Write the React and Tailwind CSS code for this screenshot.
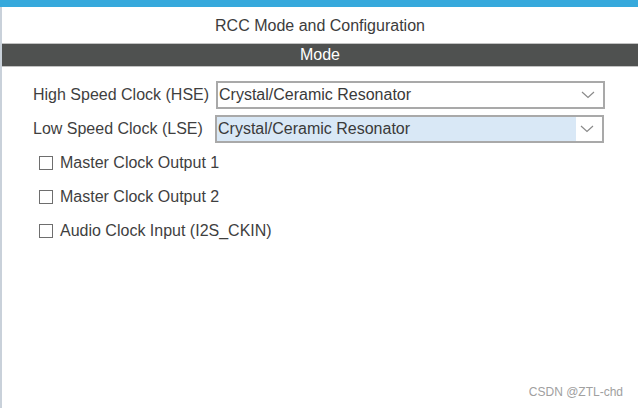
import React from "react";

function Chevron() {
  return (
    <svg width="14" height="8" viewBox="0 0 14 8" fill="none">
      <path d="M1 1 L7 6.5 L13 1" stroke="#8a8a8a" strokeWidth="1.2" />
    </svg>
  );
}

function Select({ highlighted }) {
  return (
    <div className="flex h-[28px] w-[389px] border-2 border-[#a9a9a9] bg-white">
      <div
        className={
          "flex flex-1 items-center pl-[1px] text-[16px] text-[#3a3a3a] " +
          (highlighted ? "bg-[#d9e8f6]" : "bg-white")
        }
      >
        Crystal/Ceramic Resonator
      </div>
      <div className="flex w-[26px] items-center justify-center bg-white pr-[4px]">
        <Chevron />
      </div>
    </div>
  );
}

function Check({ label }) {
  return (
    <div className="flex h-[34px] items-center">
      <div className="ml-[6px] h-[14px] w-[14px] border-[1.5px] border-[#6e6e6e] bg-white" />
      <span className="ml-[7px] text-[16px] text-[#3f3f3f]">{label}</span>
    </div>
  );
}

export default function App() {
  return (
    <div
      className="relative flex h-[408px] w-[638px] flex-col bg-white"
      style={{ fontFamily: '"Liberation Sans", Arial, sans-serif' }}
    >
      <div className="h-[7px] bg-[#36a9dc]" />
      <div className="flex flex-1 flex-col border-l-2 border-[#c9d1da]">
        <div className="flex h-[36px] items-center justify-center pt-[2px] text-[16px] text-[#3c3c3c]">
          RCC Mode and Configuration
        </div>
        <div className="flex h-[24px] items-center justify-center border-y border-[#c2c2c2] bg-[#4f5150] text-[16px] text-white">
          Mode
        </div>
        <div className="flex flex-col pl-[31px] pt-[14px]">
          <div className="flex h-[28px] items-center">
            <span className="w-[183px] text-[16px] text-[#3f3f3f]">High Speed Clock (HSE)</span>
            <Select />
          </div>
          <div className="mt-[6px] flex h-[28px] items-center">
            <span className="w-[182px] text-[16px] text-[#3f3f3f]">Low Speed Clock (LSE)</span>
            <Select highlighted />
          </div>
          <div className="mt-[3px] flex flex-col">
            <Check label="Master Clock Output 1" />
            <Check label="Master Clock Output 2" />
            <Check label="Audio Clock Input (I2S_CKIN)" />
          </div>
        </div>
      </div>
      <div className="absolute bottom-[7px] right-[15px] text-[12px] text-[#a0a0a0]">
        CSDN @ZTL-chd
      </div>
    </div>
  );
}
